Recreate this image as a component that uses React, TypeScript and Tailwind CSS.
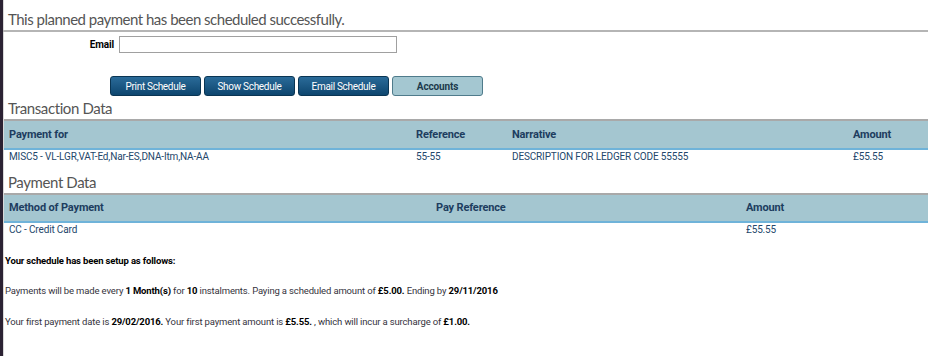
import React from 'react';

const headingFont = { fontFamily: 'Lato, "Open Sans", sans-serif' };
const bodyFont = { fontFamily: 'Roboto, "Open Sans", sans-serif' };

function SectionHeading({ children, className }: { children: React.ReactNode; className?: string }) {
    return (
        <h2 className={`h-[22px] pl-[4px] text-[15px] leading-[22px] tracking-[-0.4px] text-[#555555] ${className ?? ''}`} style={headingFont}>
            {children}
        </h2>
    );
}

function ActionButton({ label, light }: { label: string; light?: boolean }) {
    return (
        <button
            type="button"
            className={
                light
                    ? 'h-[20px] w-[91px] rounded-[3px] border border-[#4f7b8b] bg-[#a4c7d1] text-[10px] font-bold text-[#1c3a4c]'
                    : 'h-[20px] w-[91px] rounded-[3px] border border-[#0a3553] bg-gradient-to-b from-[#2a6b99] to-[#0d466f] text-[10px] tracking-[-0.3px] text-white'
            }
        >
            {label}
        </button>
    );
}

export default function App() {
    return (
        <div className="flex h-[356px] w-[928px] overflow-hidden bg-white tracking-[-0.15px]" style={bodyFont}>
            <div className="w-[3px] shrink-0 bg-[#2b2233]" />
            <div className="w-px shrink-0 bg-[#d9d9d9]" />
            <div className="flex-1">
                <h1 className="h-[30px] pl-[4px] pt-[8px] text-[15px] leading-[22px] tracking-[-0.5px] text-[#555555]" style={headingFont}>
                    This planned payment has been scheduled successfully.
                </h1>
                <div className="-ml-px border-t-2 border-[#b5b5b5]" />

                <div className="mt-[4px] flex h-[17px] items-center">
                    <label htmlFor="email" className="w-[115px] pr-[5px] text-right text-[10px] font-bold text-black">
                        Email
                    </label>
                    <input id="email" type="text" className="h-[17px] w-[278px] border border-[#a0a0a0] bg-white" />
                </div>

                <div className="ml-[106px] mt-[23px] flex gap-[3px]">
                    <ActionButton label="Print Schedule" />
                    <ActionButton label="Show Schedule" />
                    <ActionButton label="Email Schedule" />
                    <ActionButton label="Accounts" light />
                </div>

                <SectionHeading className="mt-px">Transaction Data</SectionHeading>
                <div className="text-[10px] leading-[14px]">
                    <div className="grid h-[31px] grid-cols-[407px_96px_341px_1fr] items-center border-y-2 border-t-[#a9a9a9] border-b-[#6fb3d9] bg-[#a4c6d0] pl-[5px] text-[11px] font-bold text-[#1d3d5f]">
                        <span>Payment for</span>
                        <span>Reference</span>
                        <span>Narrative</span>
                        <span>Amount</span>
                    </div>
                    <div className="grid h-[16px] grid-cols-[407px_96px_341px_1fr] pl-[5px] text-[#24476b]">
                        <span>MISC5 - VL-LGR,VAT-Ed,Nar-ES,DNA-Itm,NA-AA</span>
                        <span>55-55</span>
                        <span>DESCRIPTION FOR LEDGER CODE 55555</span>
                        <span>£55.55</span>
                    </div>
                </div>

                <SectionHeading className="mt-[5px]">Payment Data</SectionHeading>
                <div className="text-[10px] leading-[14px]">
                    <div className="grid h-[30px] grid-cols-[427px_310px_1fr] items-center border-y-2 border-t-[#a9a9a9] border-b-[#6fb3d9] bg-[#a4c6d0] pl-[5px] text-[11px] font-bold text-[#1d3d5f]">
                        <span>Method of Payment</span>
                        <span>Pay Reference</span>
                        <span>Amount</span>
                    </div>
                    <div className="grid h-[15px] grid-cols-[427px_310px_1fr] pl-[5px] text-[#24476b]">
                        <span>CC - Credit Card</span>
                        <span></span>
                        <span>£55.55</span>
                    </div>
                </div>

                <div className="ml-px text-[9.5px] leading-[14px] text-[#35333d]">
                    <p className="mt-[16px] font-bold text-black">Your schedule has been setup as follows:</p>
                    <p className="mt-[16px]">
                        Payments will be made every <b className="text-black">1 Month(s)</b> for <b className="text-black">10</b> instalments. Paying a scheduled amount of <b className="text-black">£5.00.</b> Ending by <b className="text-black">29/11/2016</b>
                    </p>
                    <p className="mt-[17px]">
                        Your first payment date is <b className="text-black">29/02/2016.</b> Your first payment amount is <b className="text-black">£5.55.</b> , which will incur a surcharge of <b className="text-black">£1.00.</b>
                    </p>
                </div>
            </div>
        </div>
    );
}
